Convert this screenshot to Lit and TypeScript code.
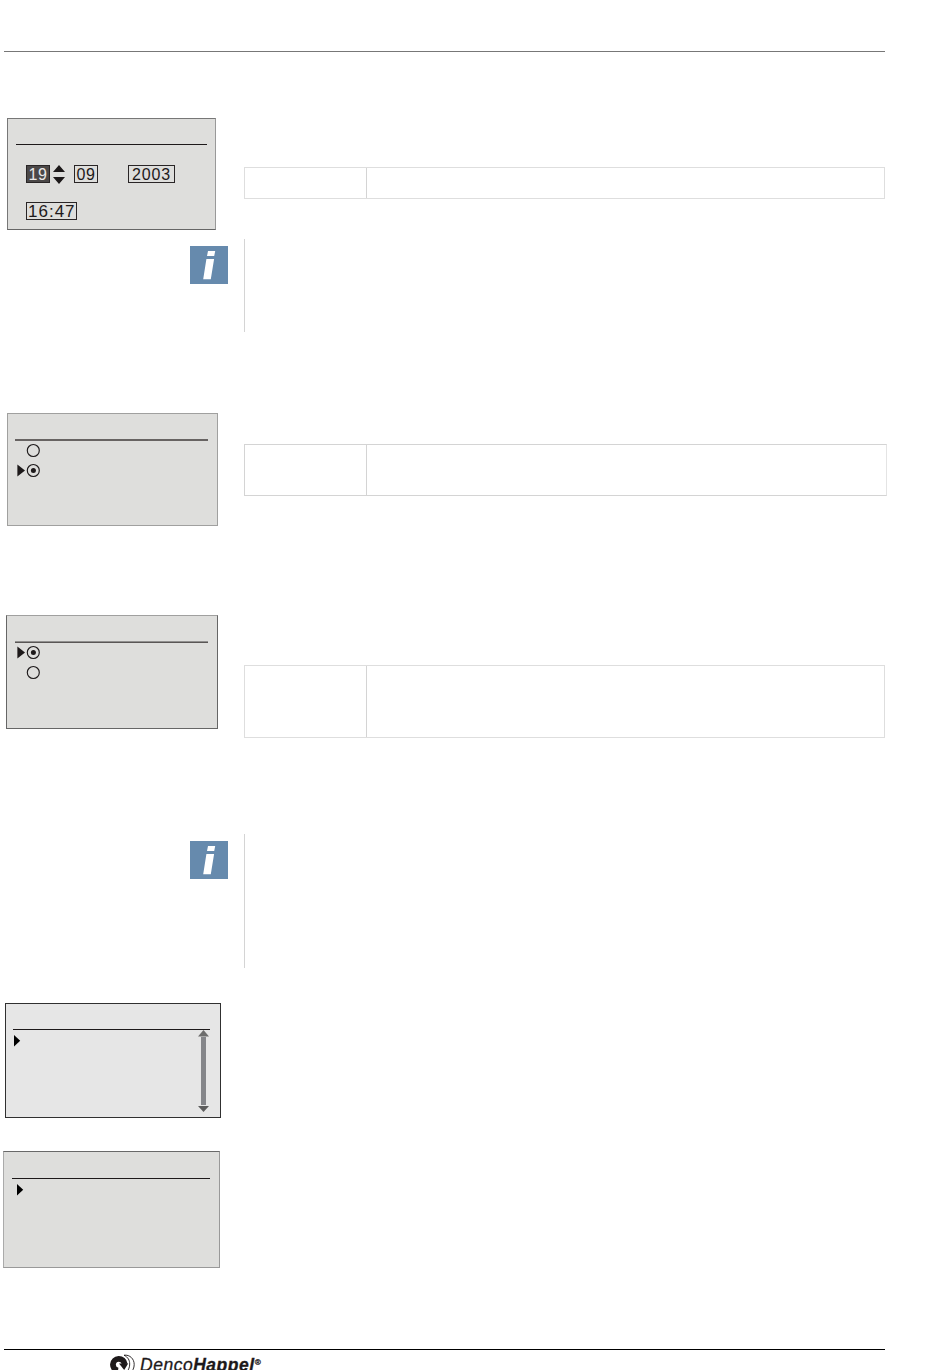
import { LitElement, html, css, svg } from "lit";
import { customElement, property } from "lit/decorators.js";

@customElement("radio-row")
class RadioRow extends LitElement {
  @property({ type: Boolean }) selected = false;
  static styles = css`
    :host { display: block; height: 20px; }
    svg { display: block; }
  `;
  render() {
    return html`<svg width="26" height="20" viewBox="0 0 26 20">
      ${this.selected ? svg`<path d="M.4 3.4 8 9.5.4 15.6z" fill="#1d191a"/><circle cx="16.4" cy="9.5" r="2.5" fill="#1d191a"/>` : null}
      <circle cx="16.3" cy="9.5" r="6" fill="none" stroke="#1d191a" stroke-width="1.15"/>
    </svg>`;
  }
}

@customElement("info-note")
class InfoNote extends LitElement {
  static styles = css`
    :host { display: flex; box-sizing: border-box; padding-left: 190px; }
    svg { display: block; margin: 7px 16px 0 0; width: 38px; height: 38px; flex: none; }
    .bar { width: 1px; background: #d4d4d4; }
  `;
  render() {
    return html`<svg viewBox="0 0 38 38">
        <rect width="38" height="38" fill="#668aad"/>
        <path d="M18 5h7.2l-1 5.1H17zM16.4 13h7.7l-3.3 20.2h-7.6z" fill="#fff"/>
      </svg><div class="bar"></div>`;
  }
}

@customElement("app-root")
class AppRoot extends LitElement {
  static styles = css`
    :host {
      display: flex; flex-direction: column; width: 950px; height: 1370px;
      overflow: hidden; background: #fff; font-family: "Liberation Sans", Arial, sans-serif;
    }
    * { box-sizing: border-box; }
    .top-rule { flex: none; margin: 51px 0 0 4px; width: 881px; height: 1px; background: #777; }
    .row { display: flex; flex: none; align-items: flex-start; }
    .clock-row { margin-top: 66px; padding-left: 7px; height: 121px; }
    .off-row { margin-top: 81px; padding-left: 7px; height: 113px; }
    .on-row { margin-top: 89px; padding-left: 6px; height: 114px; }
    .menu-row { margin-top: 35px; padding-left: 5px; }
    .last-row { margin-top: 33px; padding-left: 3px; }
    .panel { flex: none; background: #dededc; border: 1px solid #8c8c8c; }
    .rule { height: 1px; background: #1d191a; }
    .clock { width: 209px; height: 112px; border-color: #777 #999 #666 #777; padding: 25px 8px 0 8px; }
    .fields { display: flex; align-items: flex-start; padding: 20px 0 0 10px; }
    .field {
      height: 18px; border: 1px solid #292526; color: #1d191a; font-size: 16px;
      line-height: 17px; letter-spacing: .5px; text-align: center; white-space: nowrap;
    }
    .two { width: 24px; }
    .active { background: #4b4848; color: #e9e9e8; }
    .spin { width: 12px; height: 20px; margin: 0 9px 0 3px; }
    .year { width: 47px; margin-left: 30px; letter-spacing: .8px; }
    .time-row { padding-top: 17px; }
    .time { width: 51px; font-size: 17px; letter-spacing: 1px; padding-left: 1px; text-align: left; }
    .off { width: 211px; height: 113px; border-color: #a0a09f; padding: 25px 9px 0 7px; }
    .on { width: 212px; height: 114px; border-color: #a0a09f #666 #666; padding: 25px 9px 0 8px; }
    .rule.soft { height: 2px; background: #676362; }
    .rule.split { height: 2px; background: #595655; border-top: 1px solid #91908f; }
    .radios { padding-left: 2px; }
    .menu { width: 216px; height: 115px; background: #e6e6e6; border-color: #303030; padding: 25px 10px 0 7px; }
    .menu-body { display: flex; justify-content: space-between; padding-left: 1px; }
    .cursor { width: 7px; height: 12px; margin-top: 5px; }
    .scroll { width: 13px; height: 83px; }
    .last { width: 217px; height: 117px; border-color: #696969 #999 #999 #aaa; padding: 26px 9px 0 8px; }
    .last .cursor { display: block; margin-left: 5px; }
    .grid { display: grid; grid-template-columns: 121px 1fr; width: 641px; border: 1px solid #dedede; }
    .grid > div + div { border-left: 1px solid #d4d4d4; }
    .g1 { margin: 49px 0 0 28px; height: 32px; }
    .g2 { margin: 31px 0 0 26px; width: 643px; height: 52px; border-color: #d4d4d4; border-right-color: #e4e4e4; }
    .g3 { margin: 50px 0 0 26px; height: 73px; }
    .note1 { flex: none; height: 93px; }
    .note2 { flex: none; margin-top: 105px; height: 134px; }
    .foot { flex: none; margin: 81px 0 0 4px; width: 881px; border-top: 1px solid #000; height: 21px; display: flex; padding-left: 105px; }
    .mark { flex: none; width: 26px; height: 20px; margin-top: 4px; }
    .brand { font-size: 17.5px; font-style: italic; line-height: 20px; margin: 5px 0 0 5px; color: #1d191a; white-space: nowrap; letter-spacing: .52px; -webkit-text-stroke: .3px #1d191a; }
    .brand sup { font-size: 8px; line-height: 7px; vertical-align: 6px; letter-spacing: 0; }
  `;

  cursor() {
    return html`<svg class="cursor" viewBox="0 0 7 12"><path d="M0 0 6.2 5.7 0 11.4z" fill="#000"/></svg>`;
  }

  render() {
    return html`
      <div class="top-rule"></div>
      <section class="row clock-row">
        <div class="panel clock">
          <div class="rule"></div>
          <div class="fields">
            <span class="field two active">19</span>
            <svg class="spin" viewBox="0 0 12 20"><path d="M0 7 6 0l6 7zM0 12h12l-6 7z" fill="#1d191a"/></svg>
            <span class="field two">09</span>
            <span class="field year">2003</span>
          </div>
          <div class="fields time-row"><span class="field time">16:47</span></div>
        </div>
        <div class="grid g1"><div></div><div></div></div>
      </section>
      <info-note class="note1"></info-note>
      <section class="row off-row">
        <div class="panel off">
          <div class="rule soft"></div>
          <div class="radios"><radio-row></radio-row><radio-row selected></radio-row></div>
        </div>
        <div class="grid g2"><div></div><div></div></div>
      </section>
      <section class="row on-row">
        <div class="panel on">
          <div class="rule split"></div>
          <div class="radios"><radio-row selected></radio-row><radio-row></radio-row></div>
        </div>
        <div class="grid g3"><div></div><div></div></div>
      </section>
      <info-note class="note2"></info-note>
      <section class="row menu-row">
        <div class="panel menu">
          <div class="rule"></div>
          <div class="menu-body">
            ${this.cursor()}
            <svg class="scroll" viewBox="0 0 13 83">
              <path d="M1 6.5 6.5 0 12 6.5z" fill="#6d6d6d"/>
              <path d="M4 7h5v68H4z" fill="#85868a"/>
              <path d="M1 76h11l-5.5 6z" fill="#5d5d5d"/>
            </svg>
          </div>
        </div>
      </section>
      <section class="row last-row">
        <div class="panel last"><div class="rule"></div>${this.cursor()}</div>
      </section>
      <footer class="foot">
        <svg class="mark" viewBox="0 0 26 20">
          <path d="M9 16.6A5.9 5.9 0 1 1 15.700 10" fill="none" stroke="#1d191a" stroke-width="5.800"/>
          <path d="M10 9.500h9.200l-4 6.500z" fill="#1d191a"/>
          <path d="M15 1.200C21 .5 25.200 5 25.200 10.500c0 3.500-1.500 6.500-4 8.500M15 1.200c4 2 5.700 5 5.700 8.800 0 3-1 5.500-2.500 7.500" fill="none" stroke="#1d191a" stroke-width=".9"/>
        </svg>
        <span class="brand">Denco<b>Happel</b><sup>®</sup></span>
      </footer>
    `;
  }
}
